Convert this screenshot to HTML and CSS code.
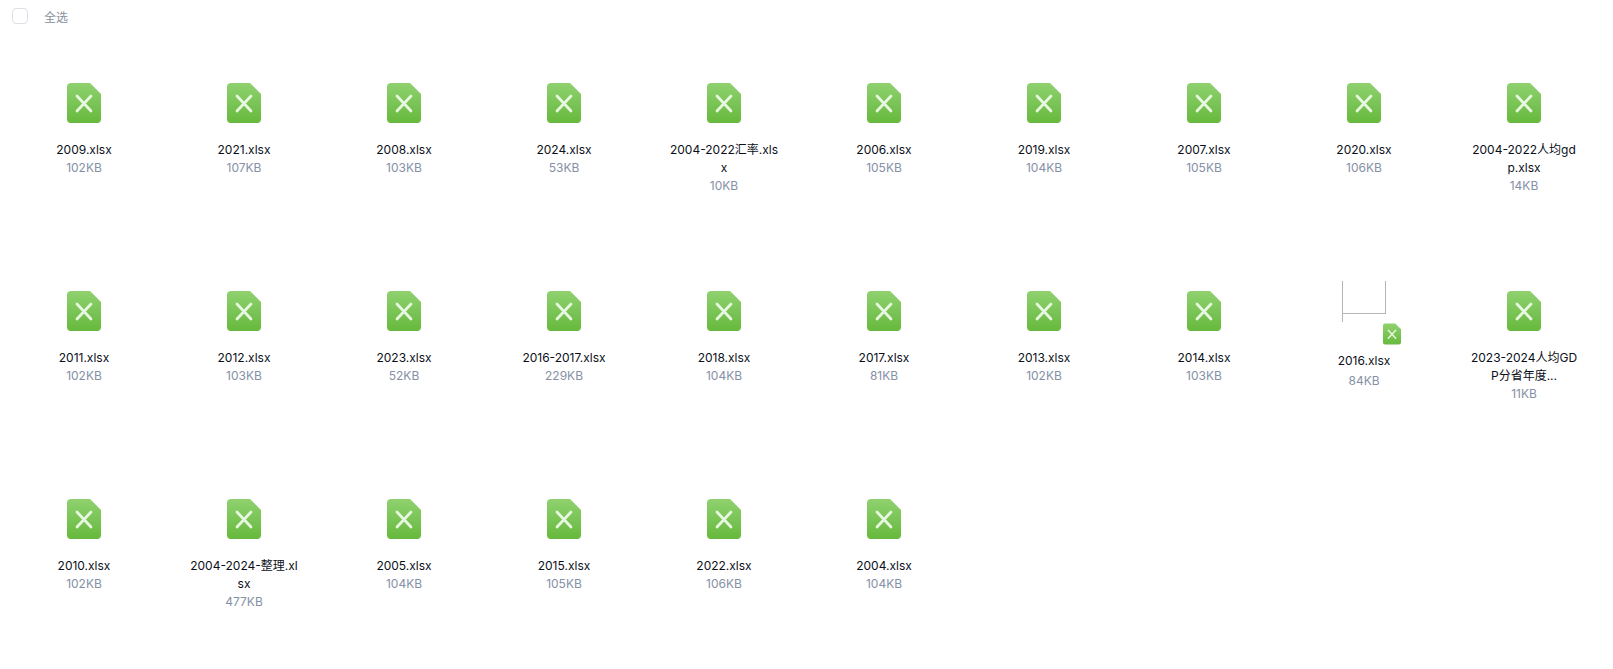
FILE: index.html
```html
<!DOCTYPE html>
<html lang="zh-CN">
<head>
    <meta charset="UTF-8">
    <title>文件列表</title>
    <link rel="stylesheet" href="styles.css">
</head>
<body>
    <svg class="defs" width="0" height="0" aria-hidden="true">
        <defs>
            <linearGradient id="xls-fill" x1="0" y1="0" x2="0" y2="1">
                <stop offset="0" stop-color="#8fd16f"/>
                <stop offset="1" stop-color="#66b93d"/>
            </linearGradient>
        </defs>
        <symbol id="xls" viewBox="0 0 34 40">
            <path d="M4 0H23L34 11V36A4 4 0 0 1 30 40H4A4 4 0 0 1 0 36V4A4 4 0 0 1 4 0Z" fill="url(#xls-fill)"/>
            <path d="M10 13L24 28M24 13L10 28" stroke="#e9f6df" stroke-width="2.8" stroke-linecap="round" fill="none"/>
        </symbol>
    </svg>

    <div class="toolbar">
        <span class="checkbox"></span>
        <span class="select-all">全选</span>
    </div>

    <div class="file-grid">
        <div class="file"><svg class="file-icon"><use href="#xls"/></svg><p class="file-name">2009.xlsx</p><p class="file-size">102KB</p></div>
        <div class="file"><svg class="file-icon"><use href="#xls"/></svg><p class="file-name">2021.xlsx</p><p class="file-size">107KB</p></div>
        <div class="file"><svg class="file-icon"><use href="#xls"/></svg><p class="file-name">2008.xlsx</p><p class="file-size">103KB</p></div>
        <div class="file"><svg class="file-icon"><use href="#xls"/></svg><p class="file-name">2024.xlsx</p><p class="file-size">53KB</p></div>
        <div class="file"><svg class="file-icon"><use href="#xls"/></svg><p class="file-name">2004-2022汇率.xlsx</p><p class="file-size">10KB</p></div>
        <div class="file"><svg class="file-icon"><use href="#xls"/></svg><p class="file-name">2006.xlsx</p><p class="file-size">105KB</p></div>
        <div class="file"><svg class="file-icon"><use href="#xls"/></svg><p class="file-name">2019.xlsx</p><p class="file-size">104KB</p></div>
        <div class="file"><svg class="file-icon"><use href="#xls"/></svg><p class="file-name">2007.xlsx</p><p class="file-size">105KB</p></div>
        <div class="file"><svg class="file-icon"><use href="#xls"/></svg><p class="file-name">2020.xlsx</p><p class="file-size">106KB</p></div>
        <div class="file"><svg class="file-icon"><use href="#xls"/></svg><p class="file-name">2004-2022人均gdp.xlsx</p><p class="file-size">14KB</p></div>

        <div class="file"><svg class="file-icon"><use href="#xls"/></svg><p class="file-name">2011.xlsx</p><p class="file-size">102KB</p></div>
        <div class="file"><svg class="file-icon"><use href="#xls"/></svg><p class="file-name">2012.xlsx</p><p class="file-size">103KB</p></div>
        <div class="file"><svg class="file-icon"><use href="#xls"/></svg><p class="file-name">2023.xlsx</p><p class="file-size">52KB</p></div>
        <div class="file"><svg class="file-icon"><use href="#xls"/></svg><p class="file-name">2016-2017.xlsx</p><p class="file-size">229KB</p></div>
        <div class="file"><svg class="file-icon"><use href="#xls"/></svg><p class="file-name">2018.xlsx</p><p class="file-size">104KB</p></div>
        <div class="file"><svg class="file-icon"><use href="#xls"/></svg><p class="file-name">2017.xlsx</p><p class="file-size">81KB</p></div>
        <div class="file"><svg class="file-icon"><use href="#xls"/></svg><p class="file-name">2013.xlsx</p><p class="file-size">102KB</p></div>
        <div class="file"><svg class="file-icon"><use href="#xls"/></svg><p class="file-name">2014.xlsx</p><p class="file-size">103KB</p></div>
        <div class="file file-thumb">
            <div class="thumb">
                <svg class="thumb-broken" width="44" height="42" viewBox="0 0 44 42">
                    <path d="M0.5 0V41M43.5 0V33M0 32.5H44" stroke="#b5b5b5" fill="none"/>
                </svg>
                <svg class="thumb-badge"><use href="#xls"/></svg>
            </div>
            <p class="file-name">2016.xlsx</p>
            <p class="file-size">84KB</p>
        </div>
        <div class="file"><svg class="file-icon"><use href="#xls"/></svg><p class="file-name">2023-2024人均GDP分省年度...</p><p class="file-size">11KB</p></div>

        <div class="file"><svg class="file-icon"><use href="#xls"/></svg><p class="file-name">2010.xlsx</p><p class="file-size">102KB</p></div>
        <div class="file"><svg class="file-icon"><use href="#xls"/></svg><p class="file-name">2004-2024-整理.xlsx</p><p class="file-size">477KB</p></div>
        <div class="file"><svg class="file-icon"><use href="#xls"/></svg><p class="file-name">2005.xlsx</p><p class="file-size">104KB</p></div>
        <div class="file"><svg class="file-icon"><use href="#xls"/></svg><p class="file-name">2015.xlsx</p><p class="file-size">105KB</p></div>
        <div class="file"><svg class="file-icon"><use href="#xls"/></svg><p class="file-name">2022.xlsx</p><p class="file-size">106KB</p></div>
        <div class="file"><svg class="file-icon"><use href="#xls"/></svg><p class="file-name">2004.xlsx</p><p class="file-size">104KB</p></div>
    </div>
</body>
</html>
```

FILE: styles.css
```css
body {
    font-family: Inter, "Noto Sans CJK SC", sans-serif;
    font-size: 12px;
    background-color: #fff;
    margin: 0;
    overflow: hidden;
}
.defs {
    position: absolute;
}
.toolbar {
    display: flex;
    align-items: center;
    gap: 16px;
    height: 16px;
    padding: 8px 12px;
}
.checkbox {
    box-sizing: border-box;
    width: 16px;
    height: 16px;
    border: 1px solid #dcdfe6;
    border-radius: 4px;
}
.select-all {
    color: #8a8f9c;
}
.file-grid {
    display: grid;
    grid-template-columns: repeat(10, 160px);
    grid-auto-rows: 208px;
    padding: 51px 0 0 4px;
}
.file {
    display: flex;
    flex-direction: column;
    align-items: center;
}
.file-icon {
    width: 34px;
    height: 40px;
    margin-bottom: 18px;
}
.file-name {
    width: 112px;
    margin: 0;
    line-height: 18px;
    color: #0b0f19;
    text-align: center;
    word-break: break-all;
}
.file-size {
    margin: 0;
    line-height: 18px;
    color: #8590a6;
}
.thumb {
    position: relative;
    width: 44px;
    height: 64px;
    margin: -10px 0 6px;
}
.thumb-broken {
    display: block;
}
.thumb-badge {
    position: absolute;
    left: 41px;
    top: 42px;
    width: 18px;
    height: 22px;
}
.file-thumb .file-name {
    line-height: 20px;
}
.file-thumb .file-size {
    line-height: 20px;
}
```
